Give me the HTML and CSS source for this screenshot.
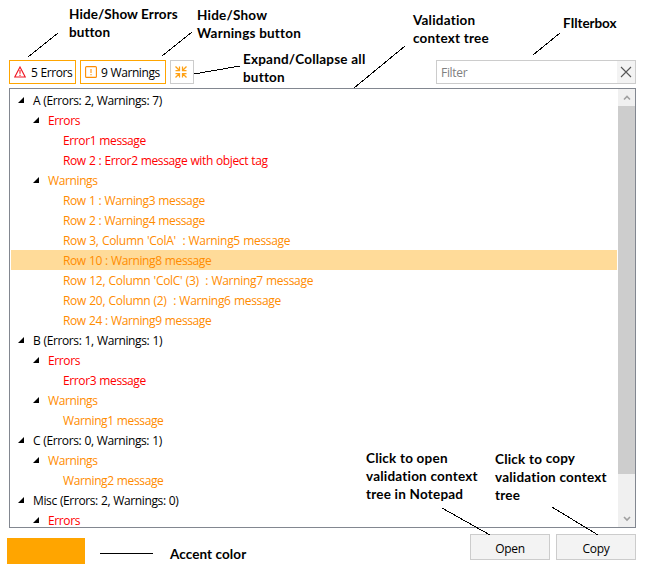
FILE: index.html
```html
<!DOCTYPE html>
<html lang="en">
<head>
<meta charset="utf-8">
<title>Validation context tree</title>
<link rel="stylesheet" href="styles.css">
</head>
<body>
<main class="page">
  <header class="toolbar">
    <button class="toggle errors">
      <svg class="icon" width="12" height="12" viewBox="0 0 12 12"><path d="M6 1 11.2 11H.8Z" fill="none" stroke="#f01420" stroke-width="1.1"/><path d="M6 4v3.7M6 8.7v1.2" stroke="#f01420" stroke-width="1.1"/></svg>
      <span>5 Errors</span>
    </button>
    <button class="toggle warnings">
      <svg class="icon" width="12" height="12" viewBox="0 0 12 12"><rect x=".6" y=".6" width="10.8" height="10.8" rx="1" fill="none" stroke="#ff8c00" stroke-width="1.1"/><path d="M6 3v4M6 8v1.3" stroke="#ff9c20" stroke-width="1.2"/></svg>
      <span>9 Warnings</span>
    </button>
    <button class="toggle collapse" aria-label="Collapse all">
      <svg width="12" height="12" viewBox="0 0 12 12" fill="none" stroke="#ffa114" stroke-width="1.25"><path d="M.5.5 4.5 4.5M11.5.5 7.5 4.5M.5 11.5 4.5 7.5M11.5 11.5 7.5 7.5M4.5 .5v4H.5M7.5 .5v4h4M.5 7.5h4v4M11.5 7.5h-4v4"/></svg>
    </button>
    <div class="filter">
      <span class="hint">Filter</span>
      <span class="clear"><svg width="12" height="12" viewBox="0 0 12 12"><path d="M1 1 11 11M11 1 1 11" stroke="#555" stroke-width="1.1"/></svg></span>
    </div>
  </header>

  <section class="tree">
    <div class="rows">
      <div class="row group"><i class="arrow"></i><span>A (Errors: 2, Warnings: 7)</span></div>
      <div class="row kind error"><i class="arrow"></i><span>Errors</span></div>
      <div class="row item error"><span>Error1 message</span></div>
      <div class="row item error"><span>Row 2 : Error2 message with object tag</span></div>
      <div class="row kind warning"><i class="arrow"></i><span>Warnings</span></div>
      <div class="row item warning"><span>Row 1 : Warning3 message</span></div>
      <div class="row item warning"><span>Row 2 : Warning4 message</span></div>
      <div class="row item warning column"><span>Row 3, Column 'ColA'  : Warning5 message</span></div>
      <div class="row item warning selected"><span>Row 10 : Warning8 message</span></div>
      <div class="row item warning column"><span>Row 12, Column 'ColC' (3)  : Warning7 message</span></div>
      <div class="row item warning column"><span>Row 20, Column (2)  : Warning6 message</span></div>
      <div class="row item warning"><span>Row 24 : Warning9 message</span></div>
      <div class="row group"><i class="arrow"></i><span>B (Errors: 1, Warnings: 1)</span></div>
      <div class="row kind error"><i class="arrow"></i><span>Errors</span></div>
      <div class="row item error"><span>Error3 message</span></div>
      <div class="row kind warning"><i class="arrow"></i><span>Warnings</span></div>
      <div class="row item warning"><span>Warning1 message</span></div>
      <div class="row group"><i class="arrow"></i><span>C (Errors: 0, Warnings: 1)</span></div>
      <div class="row kind warning"><i class="arrow"></i><span>Warnings</span></div>
      <div class="row item warning"><span>Warning2 message</span></div>
      <div class="row group"><i class="arrow"></i><span>Misc (Errors: 2, Warnings: 0)</span></div>
      <div class="row kind error"><i class="arrow"></i><span>Errors</span></div>
    </div>
    <div class="scrollbar">
      <svg class="step" width="17" height="17" viewBox="0 0 17 17"><path d="M6 10.5 9 7.5 12 10.5" fill="none" stroke="#a0a0a0" stroke-width="1.6"/></svg>
      <div class="thumb"></div>
      <svg class="step" width="17" height="17" viewBox="0 0 17 17"><path d="M6 7 9 10 12 7" fill="none" stroke="#a0a0a0" stroke-width="1.6"/></svg>
    </div>
  </section>

  <footer class="footer">
    <div class="swatch"></div>
    <div class="actions">
      <button class="action">Open</button>
      <button class="action">Copy</button>
    </div>
  </footer>

  <svg class="leaders" width="649" height="568" viewBox="0 0 649 568" shape-rendering="crispEdges" stroke="#000" fill="none">
    <path d="M58 33 28 57M192 32 162 56M194 74 240 66M405 46 354 88M560 33 533 55M442 508 490 535M552 507 598 535M100 553.5H153"/>
  </svg>
  <p class="note note-errors">Hide/Show Errors<br>button</p>
  <p class="note note-warnings">Hide/Show<br>Warnings button</p>
  <p class="note note-expand">Expand/Collapse all<br>button</p>
  <p class="note note-tree">Validation<br>context tree</p>
  <p class="note note-filter">FIlterbox</p>
  <p class="note note-open">Click to open<br>validation context<br>tree in Notepad</p>
  <p class="note note-copy">Click to <span class="raised">copy</span><br>validation context<br>tree</p>
  <p class="note note-accent">Accent color</p>
</main>
</body>
</html>
```
FILE: styles.css
```css
* { box-sizing: border-box; }

body {
  margin: 0;
  background: #fff;
  font: 12px/20px "Open Sans", "Noto Sans", sans-serif;
  color: #000;
}

.page {
  position: relative;
  width: 649px;
  height: 568px;
  padding: 60px 13px 0 9px;
  overflow: hidden;
}

button {
  font: inherit;
  color: inherit;
  padding: 0;
  margin: 0;
}

.toolbar { display: flex; height: 24px; gap: 4px; }

.toggle {
  display: flex;
  align-items: center;
  gap: 5px;
  height: 24px;
  border: 1px solid #ffa500;
  background: #fff;
  padding-left: 4px;
  white-space: nowrap;
  letter-spacing: -.42px;
  word-spacing: .4px;
}
.toggle span { padding-top: 2px; }
.errors { width: 67px; }
.warnings { width: 86px; gap: 4px; }
.collapse { width: 24px; padding: 0 2px 0 0; justify-content: center; border-color: #ccc; }
.icon { flex: none; }

.filter {
  display: flex;
  justify-content: space-between;
  width: 200px;
  margin-left: auto;
  border: 1px solid #ccc;
}
.hint { padding-left: 4px; line-height: 24px; color: #808080; letter-spacing: -.3px; }
.clear {
  display: flex;
  align-items: center;
  justify-content: center;
  width: 18px;
  background: #f3f3f3;
}

.tree {
  display: flex;
  height: 440px;
  margin-top: 4px;
  border: 1px solid #828790;
}
.rows { flex: 1; padding: 1px 0 0 1px; overflow: hidden; }
.row {
  display: flex;
  align-items: center;
  height: 20px;
  white-space: pre;
  letter-spacing: -.38px;
  word-spacing: .4px;
}
.row span { padding-top: 2px; }
.group { padding-left: 7px; }
.kind { padding-left: 22px; }
.item { padding-left: 52px; }
.column { letter-spacing: -.31px; word-spacing: .5px; }
.error { color: #f00; }
.warning { color: #ff8c00; }
.selected { background: #ffdb99; }
.arrow {
  width: 6px;
  height: 6px;
  margin-right: 9px;
  background: #000;
  clip-path: polygon(100% 0, 100% 100%, 0 100%);
}

.scrollbar { display: flex; flex-direction: column; width: 17px; margin-left: 1px; background: #f0f0f0; }
.step { flex: none; }
.step:last-child { margin-top: auto; }
.thumb { height: 368px; background: #cdcdcd; }

.footer { display: flex; justify-content: space-between; margin: 6px 0 0 -2px; }
.swatch { width: 78px; height: 26px; margin-top: 4px; background: #ffa500; }
.actions { display: flex; gap: 6px; }
.action {
  width: 80px;
  height: 26px;
  border: 1px solid #ccc;
  background: #f3f3f3;
  letter-spacing: -.3px;
  padding-top: 3px;
}

.leaders { position: absolute; left: 0; top: 0; pointer-events: none; }

.note {
  position: absolute;
  margin: 0;
  font: 700 13.5px/18px Lato, sans-serif;
  letter-spacing: .21px;
  white-space: nowrap;
}
.note-errors { left: 69px; top: 5px; letter-spacing: .08px; }
.note-warnings { left: 197px; top: 6px; }
.note-expand { left: 243px; top: 50px; }
.note-tree { left: 413px; top: 11px; }
.note-filter { left: 563px; top: 14px; letter-spacing: -.1px; }
.note-open { left: 366px; top: 449px; }
.note-copy { left: 495px; top: 450px; }
.note-accent { left: 170px; top: 545px; letter-spacing: .08px; }
.raised { position: relative; top: -1px; }
```
